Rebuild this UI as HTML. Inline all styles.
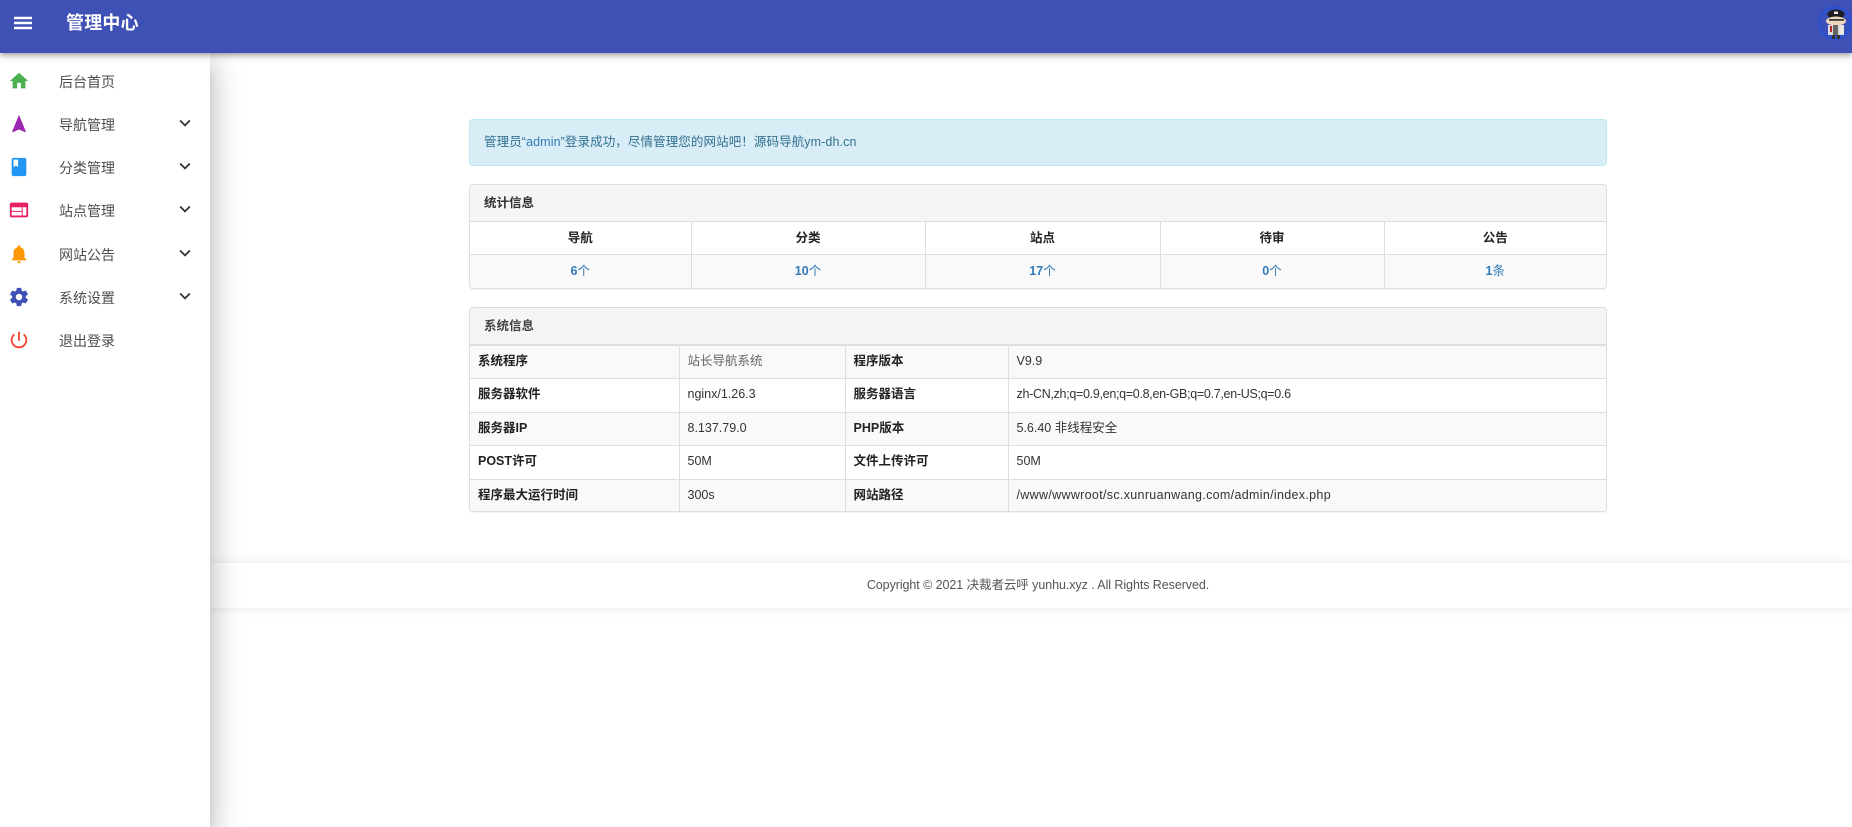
<!DOCTYPE html>
<html lang="zh-CN">
<head>
<meta charset="utf-8">
<title>管理中心</title>
<style>
*{box-sizing:border-box}
html,body{margin:0;padding:0;width:1852px;height:827px;overflow:hidden;background:#fff}
body{position:relative;font-family:"Liberation Sans","Noto Sans CJK SC",sans-serif;font-size:12.5px;color:#333}
#bar{position:absolute;left:0;top:0;width:1852px;height:53px;background:#3f51b5;z-index:5;box-shadow:0 2px 4px -1px rgba(0,0,0,.2),0 4px 5px 0 rgba(0,0,0,.14),0 1px 10px 0 rgba(0,0,0,.12)}
#bar .t{position:absolute;left:66px;top:10px;line-height:26px;font-size:18px;font-weight:700;letter-spacing:.2px;color:#fff}
#bar svg.m{position:absolute;left:11px;top:11px}
#ava{position:absolute;left:1816px;top:5px}
#side{position:absolute;left:0;top:53px;width:210px;height:774px;background:#fff;z-index:4;box-shadow:0 8px 10px -5px rgba(0,0,0,.2),0 16px 24px 2px rgba(0,0,0,.14),0 6px 30px 5px rgba(0,0,0,.12)}
.it{position:absolute;left:0;width:210px;height:24px;font-size:14px;line-height:24px;color:#4d4d4d}
.it span{position:absolute;left:59px;top:0}
.it svg{position:absolute;left:8.3px;top:0}
.it svg.c{left:174px;top:-1px;fill:#333}
.box{position:absolute;left:469px;width:1138px}
.alert{top:119px;height:47px;background:#d9edf7;border:1px solid #bce8f1;border-radius:4px;color:#31708f;line-height:44px;padding-left:14px;letter-spacing:.1px}
.alert a{color:#337ab7;text-decoration:none}
.panel{border:1px solid #ddd;border-radius:4px;background:#fff;overflow:hidden;box-shadow:0 1px 1px rgba(0,0,0,.05)}
.hd{background:#f5f5f5;padding-left:14px;color:#333}
table{border-collapse:collapse;table-layout:fixed;width:1136px;position:absolute;left:0}
td,th{border:1px solid #ddd;padding:0;font-size:12.5px;line-height:20px;vertical-align:middle}
tr>*:first-child{border-left:0}
tr>*:last-child{border-right:0}
tr:last-child>*{border-bottom:0}
#p1{top:184px;height:105px}
#p1 .hd{height:37px;line-height:37px;font-weight:700}
#p1 table{top:36px}
#p1 td,#p1 th{text-align:center}
#p1 th{height:33px;color:#222}
#p1 td{height:33px;background:#f9f9f9;color:#337ab7}
#p2{top:307px;height:205px}
#p2 .hd{height:37px;line-height:37px;font-weight:700;color:#444}
#p2 table{top:36px}
#p2 tr:first-child td{border-top:2px solid #ddd}
#p2 td{padding:0 0 2px 8px;height:33.5px}
#p2 tr:nth-child(odd) td{background:#f9f9f9}
#p2 td.b{font-weight:700;color:#222}
#foot{position:absolute;left:210px;top:563px;width:1642px;height:45px;background:#fff;box-shadow:0 0 10px rgba(0,0,0,.1);z-index:1}
#foot div{position:absolute;left:0;width:1656px;top:0;text-align:center;line-height:45px;font-size:12.5px;color:#555;letter-spacing:-.07px}
</style>
</head>
<body>
<div id="bar">
  <svg class="m" width="24" height="24" viewBox="0 0 24 24" fill="#fff"><path d="M3 18.3h18v-2.6H3v2.6zm0-5h18v-2.6H3v2.6zm0-7.6v2.6h18V5.700H3z"/></svg>
  <div class="t">管理中心</div>
  <svg id="ava" width="36" height="36" viewBox="0 0 36 36">
    <defs><radialGradient id="g"><stop offset="0" stop-color="#3f51b5"/><stop offset=".7" stop-color="#3a4fba"/><stop offset=".88" stop-color="#2a50d0"/><stop offset="1" stop-color="#3f51b5"/></radialGradient></defs>
    <circle cx="19" cy="18" r="18" fill="url(#g)"/>
    <ellipse cx="20" cy="9.500" rx="8.500" ry="5" fill="#1c1c22"/>
    <rect x="18" y="6.500" width="4" height="2.500" fill="#e6e6e6"/>
    <ellipse cx="20" cy="16" rx="10" ry="4.500" fill="#efd6ba"/>
    <rect x="13" y="14" width="15" height="1.800" fill="#3a3a3a"/>
    <rect x="12" y="20" width="16" height="10" fill="#dcdcdc"/>
    <rect x="17" y="20" width="5" height="10" fill="#666"/>
    <rect x="14" y="21" width="2" height="6" fill="#b8262c"/>
    <rect x="24" y="21" width="4" height="8" fill="#f0e8e0"/>
    <rect x="16" y="30" width="3" height="4" fill="#333"/>
    <rect x="21" y="30" width="3" height="4" fill="#333"/>
  </svg>
</div>

<div id="side">
  <div class="it" style="top:17px"><svg width="22" height="22" viewBox="0 0 24 24" fill="#4caf50"><path d="M10 20v-6h4v6h5v-8h3L12 3 2 12h3v8z"/></svg><span>后台首页</span></div>
  <div class="it" style="top:60px"><svg width="22" height="22" viewBox="0 0 24 24" fill="#9c27b0"><path d="M12 2L4.500 20.290l.71.71L12 18l6.790 3 .71-.71z"/></svg><span>导航管理</span><svg class="c" width="22" height="22" viewBox="0 0 24 24"><path d="M7.410 8.590L12 13.170l4.590-4.580L18 10l-6 6-6-6z"/></svg></div>
  <div class="it" style="top:103px"><svg width="22" height="22" viewBox="0 0 24 24" fill="#2196f3"><path d="M18 2H6c-1.100 0-2 .9-2 2v16c0 1.100.9 2 2 2h12c1.100 0 2-.9 2-2V4c0-1.100-.9-2-2-2zM6 4h5v8l-2.500-1.500L6 12V4z"/></svg><span>分类管理</span><svg class="c" width="22" height="22" viewBox="0 0 24 24"><path d="M7.410 8.590L12 13.170l4.590-4.580L18 10l-6 6-6-6z"/></svg></div>
  <div class="it" style="top:146px"><svg width="22" height="22" viewBox="0 0 24 24" fill="#e91e63"><path d="M20 4H4c-1.100 0-1.990.9-1.990 2L2 18c0 1.100.9 2 2 2h16c1.100 0 2-.9 2-2V6c0-1.100-.9-2-2-2zm-5 14H4v-4h11v4zm0-5H4V9h11v4zm5 5h-4V9h4v9z"/></svg><span>站点管理</span><svg class="c" width="22" height="22" viewBox="0 0 24 24"><path d="M7.410 8.590L12 13.170l4.590-4.580L18 10l-6 6-6-6z"/></svg></div>
  <div class="it" style="top:190px"><svg width="22" height="22" viewBox="0 0 24 24" fill="#ff9800"><path d="M12 22c1.100 0 2-.9 2-2h-4c0 1.100.89 2 2 2zm6-6v-5c0-3.070-1.640-5.640-4.500-6.320V4c0-.83-.67-1.500-1.500-1.500s-1.500.67-1.500 1.500v.68C7.630 5.360 6 7.920 6 11v5l-2 2v1h16v-1l-2-2z"/></svg><span>网站公告</span><svg class="c" width="22" height="22" viewBox="0 0 24 24"><path d="M7.410 8.590L12 13.170l4.590-4.580L18 10l-6 6-6-6z"/></svg></div>
  <div class="it" style="top:233px"><svg width="22" height="22" viewBox="0 0 24 24" fill="#3f51b5"><path d="M19.430 12.980c.04-.32.07-.64.07-.98s-.03-.66-.07-.98l2.110-1.650c.19-.15.24-.42.12-.64l-2-3.460c-.12-.22-.39-.3-.61-.22l-2.490 1c-.52-.4-1.080-.73-1.690-.98l-.38-2.650C14.460 2.180 14.250 2 14 2h-4c-.25 0-.46.18-.49.42l-.38 2.650c-.61.25-1.170.59-1.690.98l-2.490-1c-.23-.09-.49 0-.61.22l-2 3.460c-.13.22-.07.49.12.64l2.110 1.650c-.04.32-.07.65-.07.98s.03.66.07.98l-2.110 1.650c-.19.15-.24.42-.12.64l2 3.460c.12.22.39.3.61.22l2.490-1c.52.4 1.080.73 1.690.98l.38 2.650c.03.24.24.42.49.42h4c.25 0 .46-.18.49-.42l.38-2.650c.61-.25 1.170-.59 1.690-.98l2.490 1c.23.09.49 0 .61-.22l2-3.460c.12-.22.07-.49-.12-.64l-2.110-1.650zM12 15.500c-1.930 0-3.500-1.570-3.500-3.500s1.570-3.500 3.500-3.500 3.500 1.570 3.500 3.500-1.570 3.500-3.500 3.500z"/></svg><span>系统设置</span><svg class="c" width="22" height="22" viewBox="0 0 24 24"><path d="M7.410 8.590L12 13.170l4.590-4.580L18 10l-6 6-6-6z"/></svg></div>
  <div class="it" style="top:276px"><svg width="22" height="22" viewBox="0 0 24 24" fill="#f44336"><path d="M13 3h-2v10h2V3zm4.830 2.170l-1.420 1.420C17.990 7.860 19 9.810 19 12c0 3.870-3.130 7-7 7s-7-3.130-7-7c0-2.190 1.010-4.140 2.580-5.420L6.170 5.170C4.230 6.820 3 9.260 3 12c0 4.970 4.030 9 9 9s9-4.030 9-9c0-2.740-1.230-5.180-3.170-6.830z"/></svg><span>退出登录</span></div>
</div>

<div class="box alert">管理员“<a>admin</a>”登录成功，尽情管理您的网站吧！源码导航ym-dh.cn</div>

<div class="box panel" id="p1">
  <div class="hd">统计信息</div>
  <table>
    <colgroup><col style="width:221px"><col style="width:234px"><col style="width:235px"><col style="width:224px"><col style="width:222px"></colgroup>
    <tr><th>导航</th><th>分类</th><th>站点</th><th>待审</th><th>公告</th></tr>
    <tr><td><b>6</b>个</td><td><b>10</b>个</td><td><b>17</b>个</td><td><b>0</b>个</td><td><b>1</b>条</td></tr>
  </table>
</div>

<div class="box panel" id="p2">
  <div class="hd">系统信息</div>
  <table>
    <colgroup><col style="width:209px"><col style="width:166px"><col style="width:163px"><col style="width:598px"></colgroup>
    <tr><td class="b">系统程序</td><td style="color:#666">站长导航系统</td><td class="b">程序版本</td><td>V9.9</td></tr>
    <tr><td class="b">服务器软件</td><td>nginx/1.26.3</td><td class="b">服务器语言</td><td style="letter-spacing:-.3px">zh-CN,zh;q=0.9,en;q=0.8,en-GB;q=0.7,en-US;q=0.6</td></tr>
    <tr><td class="b">服务器IP</td><td>8.137.79.0</td><td class="b">PHP版本</td><td>5.6.40 非线程安全</td></tr>
    <tr><td class="b">POST许可</td><td>50M</td><td class="b">文件上传许可</td><td>50M</td></tr>
    <tr><td class="b">程序最大运行时间</td><td>300s</td><td class="b">网站路径</td><td style="letter-spacing:.32px">/www/wwwroot/sc.xunruanwang.com/admin/index.php</td></tr>
  </table>
</div>

<div id="foot"><div>Copyright © 2021 决裁者云呼 yunhu.xyz . All Rights Reserved.</div></div>
</body>
</html>
